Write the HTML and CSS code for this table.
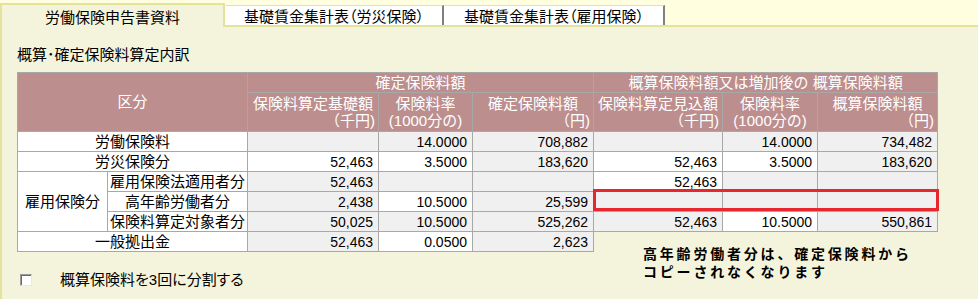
FILE: index.html
```html
<!DOCTYPE html>
<html lang="ja">
<head>
<meta charset="utf-8">
<title>労働保険申告書資料</title>
<link rel="stylesheet" href="styles.css">
</head>
<body>
<div class="tabs">
  <div class="tab active">労働保険申告書資料</div>
  <div class="tab t2">基礎賃金集計表（労災保険）</div>
  <div class="tab t3">基礎賃金集計表（雇用保険）</div>
</div>
<div class="panel">
  <div class="title">概算･確定保険料算定内訳</div>
  <div class="wrap">
    <table class="calc">
      <colgroup>
        <col class="c0a"><col class="c0b"><col class="c1"><col class="c2"><col class="c3"><col class="c4"><col class="c5"><col class="c6">
      </colgroup>
      <tr class="h1">
        <th colspan="2" rowspan="2">区分</th>
        <th colspan="3">確定保険料額</th>
        <th colspan="3">概算保険料額又は増加後の 概算保険料額</th>
      </tr>
      <tr class="h2">
        <th><div class="l1">保険料算定基礎額</div><div class="l2 r">（千円)</div></th>
        <th><div class="l1">保険料率</div><div class="l2">(1000分の)</div></th>
        <th><div class="l1">確定保険料額</div><div class="l2 r">（円)</div></th>
        <th><div class="l1">保険料算定見込額</div><div class="l2 r">（千円)</div></th>
        <th><div class="l1">保険料率</div><div class="l2">(1000分の)</div></th>
        <th><div class="l1">概算保険料額</div><div class="l2 r">（円)</div></th>
      </tr>
      <tr class="d">
        <td colspan="2" class="lab">労働保険料</td>
        <td class="n g"></td><td class="n g">14.0000</td><td class="n g">708,882</td>
        <td class="n g"></td><td class="n g">14.0000</td><td class="n g">734,482</td>
      </tr>
      <tr class="d">
        <td colspan="2" class="lab">労災保険分</td>
        <td class="n">52,463</td><td class="n">3.5000</td><td class="n g">183,620</td>
        <td class="n">52,463</td><td class="n">3.5000</td><td class="n g">183,620</td>
      </tr>
      <tr class="d">
        <td rowspan="3" class="lab">雇用保険分</td>
        <td class="lab">雇用保険法適用者分</td>
        <td class="n g">52,463</td><td class="n g"></td><td class="n g"></td>
        <td class="n">52,463</td><td class="n g"></td><td class="n g"></td>
      </tr>
      <tr class="d">
        <td class="lab">高年齢労働者分</td>
        <td class="n g">2,438</td><td class="n">10.5000</td><td class="n g">25,599</td>
        <td class="n g"></td><td class="n g"></td><td class="n g"></td>
      </tr>
      <tr class="d">
        <td class="lab">保険料算定対象者分</td>
        <td class="n g">50,025</td><td class="n g">10.5000</td><td class="n g">525,262</td>
        <td class="n g">52,463</td><td class="n">10.5000</td><td class="n g">550,861</td>
      </tr>
      <tr class="d">
        <td colspan="2" class="lab">一般拠出金</td>
        <td class="n g">52,463</td><td class="n">0.0500</td><td class="n g">2,623</td>
        <td colspan="3" class="blank"></td>
      </tr>
    </table>
    <div class="highlight"></div>
    <div class="note">高年齢労働者分は、確定保険料から<br>コピーされなくなります</div>
  </div>
  <div class="split"><span class="box"></span><span class="split-label">概算保険料を3回に分割する</span></div>
</div>
</body>
</html>
```

FILE: styles.css
```css
* { box-sizing: border-box; }
html, body { margin: 0; padding: 0; }
body {
  width: 978px;
  height: 299px;
  overflow: hidden;
  background: #FFFFE0;
  font-family: "Liberation Sans", "Noto Sans CJK JP", sans-serif;
  font-size: 15px;
  color: #000;
}

.tabs {
  display: flex;
  align-items: flex-end;
  height: 25px;
}
.tab {
  font-size: 15px;
  line-height: 18px;
  text-align: center;
  white-space: nowrap;
}
.tab.active {
  width: 225px;
  height: 24px;
  margin-bottom: -2px;
  position: relative;
  z-index: 1;
  background: #F4F4DC;
  border: 2px solid #E3E39B;
  border-bottom: none;
  padding-top: 4px;
}
.tab.t2, .tab.t3 {
  height: 20px;
  background: #fff;
  border-top: 1px solid #DCDCDC;
  border-left: 1px solid #fff;
  border-right: 2px solid #808080;
  padding-top: 2px;
  font-feature-settings: "palt";
}
.tab.t2 { width: 219px; }
.tab.t3 { width: 221px; }

.panel {
  height: 274px;
  background: #F4F4DC;
  border-top: 2px solid #E3E39B;
  border-left: 2px solid #E3E39B;
  padding: 19px 0 0 15px;
}
.title {
  font-size: 15px;
  line-height: 18px;
  margin-bottom: 8px;
}

.wrap {
  position: relative;
  width: 920px;
}
.calc {
  border-collapse: collapse;
  table-layout: fixed;
  width: 920px;
}
.c0a { width: 90px; }
.c0b { width: 140px; }
.c1 { width: 131px; }
.c2 { width: 94px; }
.c3 { width: 121px; }
.c4 { width: 129px; }
.c5 { width: 95px; }
.c6 { width: 120px; }

.calc th, .calc td {
  border: 1px solid #A8A8A8;
  padding: 0;
  font-size: 15px;
  line-height: 18px;
  white-space: nowrap;
  overflow: hidden;
}
.calc th {
  background: #BC8E8E;
  color: #fff;
  font-weight: normal;
  text-align: center;
}
.h1 { height: 20px; }
.h2 { height: 39px; }
.h2 th {
  vertical-align: top;
  line-height: 17px;
  padding: 2px 3px 0 3px;
}
.h2 .l1 { text-align: center; }
.h2 .l2 { text-align: center; }
.h2 .l2.r { text-align: right; }

.d { height: 20px; }
.calc td { background: #fff; }
.calc td.lab { text-align: center; }
.calc td.n {
  font-size: 14px;
  text-align: right;
  padding-right: 5px;
}
.calc td.g { background: #F0F0F0; }
.calc td.blank {
  background: transparent;
  border: none;
}

.highlight {
  position: absolute;
  left: 576px;
  top: 117px;
  width: 346px;
  height: 22px;
  border: 3px solid #E8262E;
}
.note {
  position: absolute;
  left: 626px;
  top: 173px;
  font-size: 14px;
  font-weight: bold;
  line-height: 18px;
  letter-spacing: 2.8px;
  white-space: nowrap;
}

.split {
  display: flex;
  align-items: center;
  margin-top: 19px;
  margin-left: 3px;
  height: 18px;
}
.box {
  width: 12px;
  height: 12px;
  background: #fff;
  border-top: 1px solid #9A9A9A;
  border-left: 1px solid #9A9A9A;
  border-right: 1px solid #E8E8E8;
  border-bottom: 1px solid #E8E8E8;
  box-shadow: inset 1px 1px 0 #6A6A6A;
}
.split-label {
  margin-left: 28px;
  font-size: 15px;
  line-height: 18px;
  font-feature-settings: "palt";
}
```
